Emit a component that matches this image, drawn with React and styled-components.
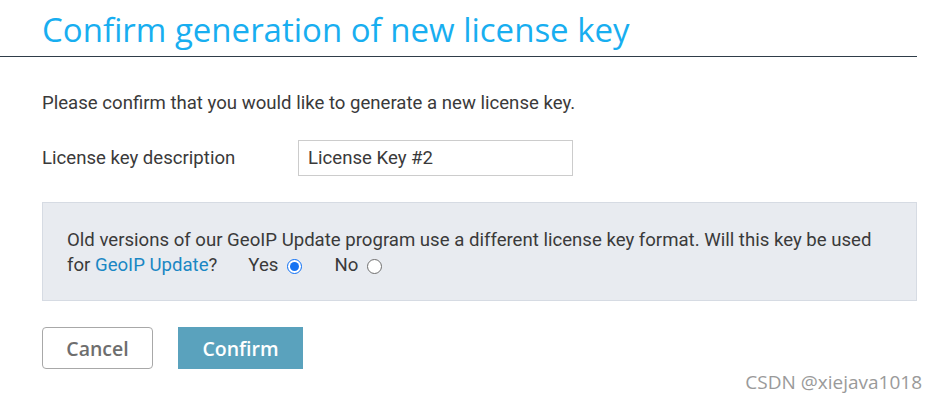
import React from "react";
import styled, { createGlobalStyle } from "styled-components";

const Global = createGlobalStyle`
  html, body { margin: 0; padding: 0; background: #fff; }
  body { width: 938px; height: 404px; overflow: hidden; font-family: Roboto, "Liberation Sans", sans-serif; }
`;

const Page = styled.div`
  position: relative;
  width: 938px;
  height: 404px;
`;

const Header = styled.div`
  width: 917px;
  height: 57px;
  box-sizing: border-box;
  border-bottom: 1px solid #2f3d49;
  padding: 11px 0 0 42px;
`;

const Title = styled.h1`
  margin: 0;
  font-family: "Open Sans", sans-serif;
  font-weight: 400;
  font-size: 33px;
  line-height: 38px;
  color: #18aef0;
`;

const Body = styled.div`
  padding: 32px 21px 0 42px;
  display: flex;
  flex-direction: column;
`;

const Lead = styled.p`
  margin: 0;
  font-size: 18.6px;
  line-height: 28px;
  color: #3a3a3a;
`;

const FieldRow = styled.div`
  display: flex;
  align-items: center;
  margin-top: 23px;
`;

const Label = styled.label`
  width: 256px;
  font-size: 18.6px;
  color: #3a3a3a;
`;

const Input = styled.div`
  width: 275px;
  height: 36px;
  box-sizing: border-box;
  border: 1px solid #ccc;
  padding: 0 9px;
  font-size: 18.6px;
  line-height: 34px;
  color: #3a3a3a;
`;

const Notice = styled.div`
  margin-top: 26px;
  width: 875px;
  height: 99px;
  box-sizing: border-box;
  background: #e8ebf0;
  border: 1px solid #d6dbe3;
  padding: 25px 20px 0 24px;
  font-size: 18.6px;
  line-height: 25px;
  color: #3a3a3a;
`;

const Link = styled.a`
  color: #1a87c4;
  text-decoration: none;
`;

const Choice = styled.span`
  display: inline-flex;
  align-items: center;
  margin-left: ${p => p.$gap}px;
  gap: 9px;
`;

const Radio = styled.span`
  flex: none;
  display: inline-block;
  width: 15px;
  height: 15px;
  box-sizing: border-box;
  border-radius: 50%;
  background: #fff;
  border: ${p => (p.$checked ? "1.5px solid #0a6ef5" : "1px solid #6f6f6f")};
  position: relative;
  top: 1px;
  ${p =>
    p.$checked &&
    `&::after{content:"";position:absolute;left:1.5px;top:1.5px;width:9px;height:9px;border-radius:50%;background:#1573f2;}`}
`;

const Actions = styled.div`
  display: flex;
  gap: 25px;
  margin-top: 26px;
`;

const Button = styled.button`
  height: 42px;
  box-sizing: border-box;
  border-radius: ${p => (p.$primary ? "0" : "4px")};
  border: ${p => (p.$primary ? "none" : "1px solid #a8a8a8")};
  background: ${p => (p.$primary ? "#5aa2bd" : "#fff")};
  color: ${p => (p.$primary ? "#fff" : "#6e6e6e")};
  width: ${p => p.$w}px;
  font-family: "Open Sans", sans-serif;
  font-weight: 600;
  font-size: 19.5px;
  padding: 0;
`;

const Watermark = styled.div`
  position: absolute;
  right: 16px;
  bottom: 9px;
  font-family: "Open Sans", sans-serif;
  font-size: 19px;
  color: #9a9a9a;
`;

export default function App() {
  return (
    <Page>
      <Global />
      <Header>
        <Title>Confirm generation of new license key</Title>
      </Header>
      <Body>
        <Lead>Please confirm that you would like to generate a new license key.</Lead>
        <FieldRow>
          <Label>License key description</Label>
          <Input>License Key #2</Input>
        </FieldRow>
        <Notice>
          Old versions of our GeoIP Update program use a different license key format. Will this key be used
          <br />
          for <Link href="#">GeoIP Update</Link>?
          <Choice $gap={31}>Yes<Radio $checked /></Choice>
          <Choice $gap={32}>No<Radio /></Choice>
        </Notice>
        <Actions>
          <Button $w={111}>Cancel</Button>
          <Button $primary $w={125}>Confirm</Button>
        </Actions>
      </Body>
      <Watermark>CSDN @xiejava1018</Watermark>
    </Page>
  );
}
